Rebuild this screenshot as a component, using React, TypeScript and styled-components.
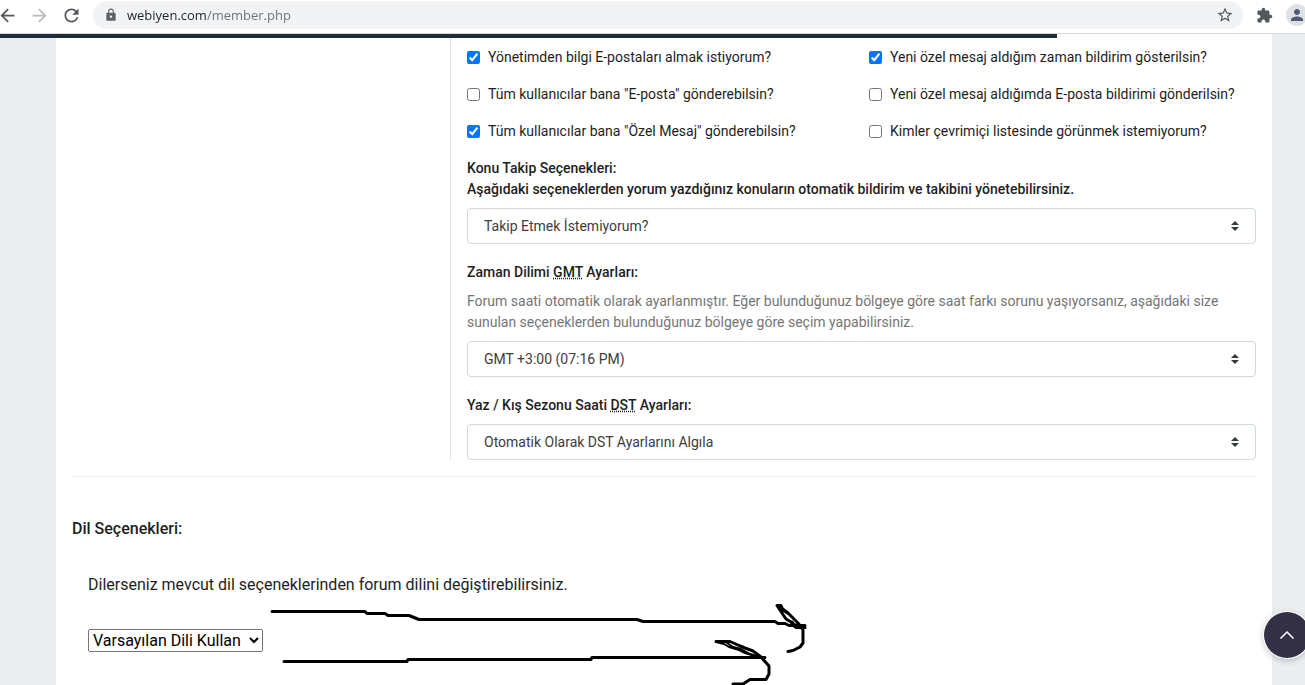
import React from "react";
import styled, { createGlobalStyle } from "styled-components";
import {
  MdArrowBack,
  MdArrowForward,
  MdExtension,
  MdLock,
  MdPerson,
  MdRefresh,
  MdStarBorder,
} from "react-icons/md";

const GlobalStyle = createGlobalStyle`
  *, *::before, *::after { box-sizing: border-box; }
  body {
    margin: 0;
    background: #eaeef1;
    color: #1e1e1e;
    font: 400 14px/21px Roboto, "Liberation Sans", sans-serif;
  }
  p, h2, h3 { margin: 0; }
`;

const Page = styled.div`
  display: flex;
  flex-direction: column;
  min-height: 100vh;
`;

const Toolbar = styled.header`
  display: flex;
  align-items: center;
  height: 34px;
  padding-bottom: 3px;
  overflow: hidden;
  background: #fff;
  border-bottom: 1px solid #d5d8db;
`;

const NavButtons = styled.div`
  display: flex;
  margin: 0 6px 0 -9px;
`;

const IconButton = styled.button<{ $color?: string; $size?: number; $width?: number }>`
  display: flex;
  flex: none;
  align-items: center;
  justify-content: center;
  width: ${(p) => p.$width ?? 32}px;
  height: 28px;
  padding: 0;
  border: 0;
  background: none;
  color: ${(p) => p.$color ?? "#54585d"};

  svg {
    width: ${(p) => p.$size ?? 21}px;
    height: ${(p) => p.$size ?? 21}px;
  }
`;

const Omnibox = styled.div`
  display: flex;
  flex: 1;
  align-items: center;
  height: 28px;
  padding-left: 11px;
  border-radius: 14px;
  background: #f1f3f4;
  color: #5f6368;
`;

const Address = styled.input`
  flex: 1;
  min-width: 0;
  height: 28px;
  margin-left: 9px;
  padding: 0;
  border: 0;
  outline: 0;
  background: linear-gradient(90deg, #202124 79px, #6b6f74 79px);
  background-clip: text;
  -webkit-background-clip: text;
  -webkit-text-fill-color: transparent;
  font: 400 13px/28px "Open Sans", "Noto Sans", sans-serif;
`;

const Avatar = styled.button`
  display: flex;
  flex: none;
  align-items: center;
  justify-content: center;
  width: 22px;
  height: 22px;
  margin: 0 -3px 0 0;
  padding: 0;
  border: 0;
  border-radius: 50%;
  background: #dee1e6;
  color: #4d5b75;
`;

const Viewport = styled.main`
  position: relative;
  display: flex;
  flex: 1;
  padding: 0 33px 0 56px;
  overflow: hidden;
`;

const Progress = styled.div`
  position: absolute;
  top: 0;
  left: 0;
  width: 81%;
  height: 4px;
  background: #212b3a;
`;

const Card = styled.div`
  flex: 1;
  min-width: 0;
  padding: 0 16px;
  background: #fff;
`;

const Settings = styled.section`
  display: grid;
  grid-template-columns: 378px 1fr;
  padding-bottom: 16px;
  border-bottom: 1px solid #eaeef1;
`;

const Options = styled.div`
  grid-column: 2;
  padding: 13px 0 0 16px;
  border-left: 1px dotted #c5c9cd;
`;

const CheckGrid = styled.div`
  display: grid;
  grid-template-columns: 1fr 1fr;
  gap: 16px 15px;
  margin-bottom: 16px;
`;

const CheckLabel = styled.label`
  display: flex;
  align-items: center;
  gap: 8px;
  white-space: nowrap;

  input {
    flex: none;
    width: 13px;
    height: 13px;
    margin: 0;
  }
`;

const Field = styled.div`
  & + & { margin-top: 18px; }
`;

const FieldLabel = styled.label`
  display: block;
  margin-bottom: 8px;
  font-weight: 500;

  abbr {
    text-decoration: underline dotted;
  }
`;

const Hint = styled.p`
  margin-bottom: 8px;
  color: #757575;
`;

const SelectBox = styled.div`
  position: relative;

  svg {
    position: absolute;
    top: 13px;
    right: 17px;
    pointer-events: none;
  }
`;

const Select = styled.select`
  display: block;
  width: 100%;
  height: 36px;
  padding: 0 40px 0 16px;
  appearance: none;
  border: 1px solid #cfd8dc;
  border-radius: 4px;
  background: #fff;
  color: #3d3d3d;
  font: inherit;
`;

const Language = styled.section`
  position: relative;
  padding-top: 40px;
  font-size: 16px;
  line-height: 24px;
`;

const SectionTitle = styled.h2`
  font-size: 16px;
  font-weight: 500;
`;

const LanguageBody = styled.div`
  display: flex;
  flex-direction: column;
  align-items: flex-start;
  gap: 32px;
  padding: 32px 16px;
`;

const LanguageSelect = styled.select`
  width: 175px;
  height: 23px;
  font: 400 16px Roboto, "Liberation Sans", sans-serif;
`;

const Scribble = styled.svg`
  position: absolute;
  top: 123px;
  left: 188px;
  pointer-events: none;
`;

const ToTop = styled.button`
  position: fixed;
  right: -5px;
  bottom: 27px;
  display: flex;
  align-items: center;
  justify-content: center;
  width: 46px;
  height: 46px;
  padding: 0;
  border: 0;
  border-radius: 50%;
  background: #333045;
  box-shadow: 0 0 0 1px #fff, 0 2px 6px 1px rgba(0, 0, 0, 0.2);
`;

const checks = [
  { id: "admin", text: "Yönetimden bilgi E-postaları almak istiyorum?", on: true },
  { id: "pm-popup", text: "Yeni özel mesaj aldığım zaman bildirim gösterilsin?", on: true },
  { id: "email", text: 'Tüm kullanıcılar bana "E-posta" gönderebilsin?', on: false },
  { id: "pm-email", text: "Yeni özel mesaj aldığımda E-posta bildirimi gönderilsin?", on: false },
  { id: "pm", text: 'Tüm kullanıcılar bana "Özel Mesaj" gönderebilsin?', on: true },
  { id: "invisible", text: "Kimler çevrimiçi listesinde görünmek istemiyorum?", on: false },
];

function Dropdown({ id, value }: { id: string; value: string }) {
  return (
    <SelectBox>
      <Select id={id}>
        <option>{value}</option>
      </Select>
      <svg width="8" height="10" viewBox="0 0 8 10" fill="#343a40" aria-hidden="true">
        <path d="M4 0 8 4H0zM4 10 0 6h8z" />
      </svg>
    </SelectBox>
  );
}

export default function App() {
  return (
    <Page>
      <GlobalStyle />
      <Toolbar>
        <NavButtons>
          <IconButton aria-label="Geri"><MdArrowBack /></IconButton>
          <IconButton aria-label="İleri" $color="#b9bbbe"><MdArrowForward /></IconButton>
          <IconButton aria-label="Yenile"><MdRefresh /></IconButton>
        </NavButtons>
        <Omnibox>
          <MdLock size={14} />
          <Address aria-label="Adres" defaultValue="webiyen.com/member.php" />
          <IconButton aria-label="Yer imi" $size={18} $width={36}><MdStarBorder /></IconButton>
        </Omnibox>
        <IconButton aria-label="Uzantılar" $size={17} $width={43}><MdExtension /></IconButton>
        <Avatar aria-label="Profil"><MdPerson size={18} /></Avatar>
      </Toolbar>
      <Viewport>
        <Card>
          <Settings>
            <Options>
              <CheckGrid>
                {checks.map((c) => (
                  <CheckLabel key={c.id} htmlFor={c.id}>
                    <input id={c.id} type="checkbox" defaultChecked={c.on} />
                    {c.text}
                  </CheckLabel>
                ))}
              </CheckGrid>
              <Field>
                <FieldLabel htmlFor="follow">
                  Konu Takip Seçenekleri:
                  <br />
                  Aşağıdaki seçeneklerden yorum yazdığınız konuların otomatik bildirim ve takibini yönetebilirsiniz.
                </FieldLabel>
                <Dropdown id="follow" value="Takip Etmek İstemiyorum?" />
              </Field>
              <Field>
                <FieldLabel htmlFor="gmt">
                  Zaman Dilimi <abbr title="Greenwich Mean Time">GMT</abbr> Ayarları:
                </FieldLabel>
                <Hint>
                  Forum saati otomatik olarak ayarlanmıştır. Eğer bulunduğunuz bölgeye göre saat farkı sorunu
                  yaşıyorsanız, aşağıdaki size sunulan seçeneklerden bulunduğunuz bölgeye göre seçim yapabilirsiniz.
                </Hint>
                <Dropdown id="gmt" value="GMT +3:00 (07:16 PM)" />
              </Field>
              <Field>
                <FieldLabel htmlFor="dst">
                  Yaz / Kış Sezonu Saati <abbr title="Daylight Saving Time">DST</abbr> Ayarları:
                </FieldLabel>
                <Dropdown id="dst" value="Otomatik Olarak DST Ayarlarını Algıla" />
              </Field>
            </Options>
          </Settings>
          <Language>
            <SectionTitle>Dil Seçenekleri:</SectionTitle>
            <LanguageBody>
              <label htmlFor="language">Dilerseniz mevcut dil seçeneklerinden forum dilini değiştirebilirsiniz.</label>
              <LanguageSelect id="language">
                <option>Varsayılan Dili Kullan</option>
              </LanguageSelect>
            </LanguageBody>
            <Scribble
              width="560"
              height="85"
              viewBox="260 600 560 85"
              fill="none"
              stroke="#000"
              strokeWidth="3"
              strokeLinecap="round"
              strokeLinejoin="round"
              aria-hidden="true"
            >
              <path d="M272 611.500H365L367 613.500H385L388 615.500H409L419 619.500H637L643 621.500H775L778 623.500H785L789 625.500H805" />
              <path d="M805 627.500H796L792 622M777 605.500H781L783 610L789 614L798 623L803 630V643L800 647L793 650.500L788 651.500M777 605.500L782 613L786 619L791 622L794 626L799 624L788 613L780 607" />
              <path d="M284 661.500H407L408 659.500H591L592 657.500H765" />
              <path d="M716 641.500H730L739 645.500L745 648L753 651L761 657L769 666V674L766 679.500H750L743 684H733" />
              <path strokeWidth="2" d="M716 642L724 644L729 647L739 650L745 653L755 656M727 643L733 647L741 649L750 654L760 657" />
            </Scribble>
          </Language>
        </Card>
        <Progress />
      </Viewport>
      <ToTop aria-label="Yukarı çık">
        <svg width="16" height="10" viewBox="0 0 16 10" fill="none" stroke="#fff" strokeWidth="1.5" aria-hidden="true">
          <path d="M1.500 8.500 8 2l6.500 6.500" />
        </svg>
      </ToTop>
    </Page>
  );
}
